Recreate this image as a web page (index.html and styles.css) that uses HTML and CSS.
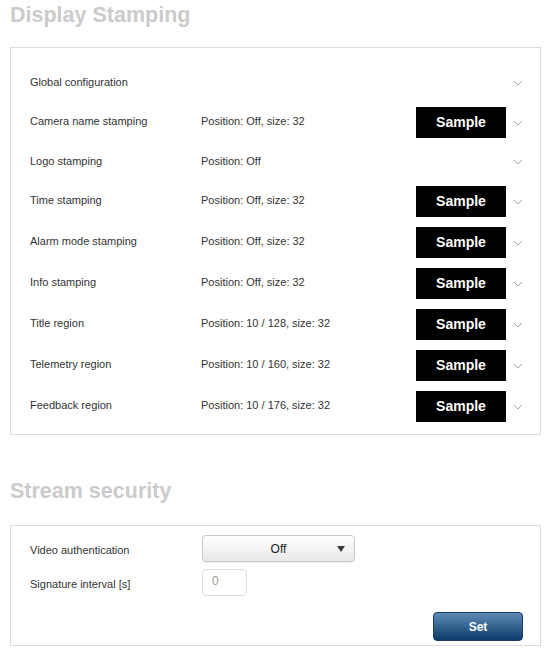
FILE: index.html
```html
<!DOCTYPE html>
<html>
  <head>
    <title>Display Stamping</title>
    <link rel="stylesheet" href="styles.css">
  </head>
  <body>
    <h1 class="section-title">Display Stamping</h1>

    <div class="panel stamp-panel">
      <div class="stamp-row">
        <span class="stamp-name">Global configuration</span>
        <span class="stamp-value"></span>
        <span></span>
        <span class="chevron"><svg width="10" height="6" viewBox="0 0 10 6"><path d="M1 1 L5 5 L9 1"/></svg></span>
      </div>
      <div class="stamp-row">
        <span class="stamp-name">Camera name stamping</span>
        <span class="stamp-value">Position: Off, size: 32</span>
        <span class="sample">Sample</span>
        <span class="chevron"><svg width="10" height="6" viewBox="0 0 10 6"><path d="M1 1 L5 5 L9 1"/></svg></span>
      </div>
      <div class="stamp-row">
        <span class="stamp-name">Logo stamping</span>
        <span class="stamp-value">Position: Off</span>
        <span></span>
        <span class="chevron"><svg width="10" height="6" viewBox="0 0 10 6"><path d="M1 1 L5 5 L9 1"/></svg></span>
      </div>
      <div class="stamp-row">
        <span class="stamp-name">Time stamping</span>
        <span class="stamp-value">Position: Off, size: 32</span>
        <span class="sample">Sample</span>
        <span class="chevron"><svg width="10" height="6" viewBox="0 0 10 6"><path d="M1 1 L5 5 L9 1"/></svg></span>
      </div>
      <div class="stamp-row">
        <span class="stamp-name">Alarm mode stamping</span>
        <span class="stamp-value">Position: Off, size: 32</span>
        <span class="sample">Sample</span>
        <span class="chevron"><svg width="10" height="6" viewBox="0 0 10 6"><path d="M1 1 L5 5 L9 1"/></svg></span>
      </div>
      <div class="stamp-row">
        <span class="stamp-name">Info stamping</span>
        <span class="stamp-value">Position: Off, size: 32</span>
        <span class="sample">Sample</span>
        <span class="chevron"><svg width="10" height="6" viewBox="0 0 10 6"><path d="M1 1 L5 5 L9 1"/></svg></span>
      </div>
      <div class="stamp-row">
        <span class="stamp-name">Title region</span>
        <span class="stamp-value">Position: 10 / 128, size: 32</span>
        <span class="sample">Sample</span>
        <span class="chevron"><svg width="10" height="6" viewBox="0 0 10 6"><path d="M1 1 L5 5 L9 1"/></svg></span>
      </div>
      <div class="stamp-row">
        <span class="stamp-name">Telemetry region</span>
        <span class="stamp-value">Position: 10 / 160, size: 32</span>
        <span class="sample">Sample</span>
        <span class="chevron"><svg width="10" height="6" viewBox="0 0 10 6"><path d="M1 1 L5 5 L9 1"/></svg></span>
      </div>
      <div class="stamp-row">
        <span class="stamp-name">Feedback region</span>
        <span class="stamp-value">Position: 10 / 176, size: 32</span>
        <span class="sample">Sample</span>
        <span class="chevron"><svg width="10" height="6" viewBox="0 0 10 6"><path d="M1 1 L5 5 L9 1"/></svg></span>
      </div>
    </div>

    <h1 class="section-title second">Stream security</h1>

    <div class="panel security-panel">
      <div class="form-row">
        <label>Video authentication</label>
        <div class="select">
          <span class="select-text">Off</span>
          <span class="select-arrow"></span>
        </div>
      </div>
      <div class="form-row">
        <label for="sig-interval">Signature interval [s]</label>
        <input type="text" id="sig-interval" class="num-input" value="0">
      </div>
      <div class="button-row">
        <button class="set-btn">Set</button>
      </div>
    </div>
  </body>
</html>
```

FILE: styles.css
```css
body {
  margin: 0 10px;
  font-family: "Liberation Sans", Arial, sans-serif;
  font-size: 11px;
  color: #333;
  background: #fff;
}

.section-title {
  margin: 3px 0 20px;
  font-size: 21.5px;
  line-height: 24px;
  font-weight: bold;
  color: #cbcbcb;
}

.section-title.second {
  margin-top: 44px;
  margin-bottom: 22px;
}

.panel {
  border: 1px solid #dcdcdc;
}

/* stamping list */
.stamp-panel {
  padding: 16px 10px 7px 19px;
}

.stamp-row {
  display: grid;
  grid-template-columns: 171px 1fr 90px 24px;
  align-items: center;
  min-height: 28px;
  padding: 5px 0;
}

.stamp-name,
.stamp-value {
  padding-bottom: 3px;
}

.sample {
  height: 31px;
  line-height: 31px;
  background: #000;
  color: #fff;
  font-size: 14px;
  font-weight: bold;
  text-align: center;
}

.chevron {
  display: flex;
  justify-content: center;
}

.chevron svg path {
  fill: none;
  stroke: #a8a8a8;
  stroke-width: 1;
}

/* stream security form */
.security-panel {
  padding: 9px 17px 4px 19px;
}

.form-row {
  display: grid;
  grid-template-columns: 172px auto;
  justify-content: start;
  align-items: center;
  margin-bottom: 7px;
}

.form-row label {
  padding-top: 2px;
}

.select {
  position: relative;
  box-sizing: border-box;
  width: 153px;
  height: 27px;
  border: 1px solid #c8c8c8;
  border-radius: 4px;
  background: linear-gradient(#ffffff, #e8e8e8);
  box-shadow: 0 1px 1px rgba(0, 0, 0, 0.08);
  display: flex;
  align-items: center;
  justify-content: center;
  font-size: 12px;
  color: #222;
}

.select-arrow {
  position: absolute;
  right: 9px;
  top: 10px;
  width: 0;
  height: 0;
  border-left: 4px solid transparent;
  border-right: 4px solid transparent;
  border-top: 6px solid #3c3c3c;
}

.num-input {
  box-sizing: border-box;
  width: 45px;
  height: 27px;
  margin: 0;
  padding: 0 0 3px 9px;
  border: 1px solid #dedede;
  border-radius: 4px;
  font-family: inherit;
  font-size: 12px;
  color: #999;
}

.button-row {
  display: flex;
  justify-content: flex-end;
  margin-top: 16px;
}

.set-btn {
  width: 90px;
  height: 29px;
  border: 1px solid #1b3c60;
  border-radius: 4px;
  background: linear-gradient(#5e8bb5, #0d3c6a);
  color: #fff;
  font-family: inherit;
  font-size: 12px;
  font-weight: bold;
  cursor: pointer;
}
```
